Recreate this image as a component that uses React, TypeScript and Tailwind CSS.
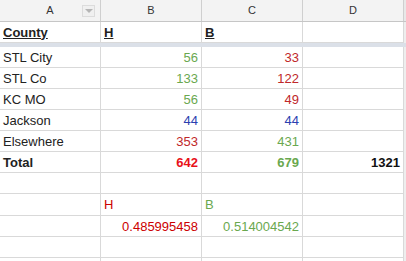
import React from "react";

const font = { fontFamily: '"Liberation Sans", Arial, sans-serif' };

type Cell = {
	text?: string;
	cls?: string;
	right?: boolean;
};

const Row = ({ cells, h = "h-[21px]" }: { cells: Cell[]; h?: string }) => (
	<div className={`flex ${h}`}>
		{cells.map((c, i) => (
			<div
				key={i}
				className={`w-[101px] shrink-0 border-r border-b border-[#d9d9d9] flex items-center px-[3px] text-[13px] leading-none ${c.right ? "justify-end" : ""} ${c.cls ?? "text-[#222]"}`}
			>
				{c.text}
			</div>
		))}
		<div className="flex-1 bg-[#eeeeee]" />
	</div>
);

const green = "text-[#6aa84f]";
const red = "text-[#c0282a]";
const blue = "text-[#2b3fb0]";

export default function App() {
	return (
		<div className="w-[406px] h-[261px] overflow-hidden bg-white" style={font}>
			{/* column headers */}
			<div className="flex h-[22px] bg-[#f3f3f3] border-b border-[#c6c6c6]">
				{["A", "B", "C", "D"].map((l) => (
					<div
						key={l}
						className="relative w-[101px] shrink-0 border-r border-[#cfcfcf] flex items-center justify-center text-[11px] text-[#333]"
					>
						{l}
						{l === "A" && (
							<div className="absolute left-[82px] top-[5px] w-[13px] h-[12px] border border-[#dcdcdc] bg-[#f0f0f0] flex items-center justify-center">
								<div className="w-0 h-0 border-l-[4px] border-r-[4px] border-t-[4px] border-l-transparent border-r-transparent border-t-[#b5b5b5]" />
							</div>
						)}
					</div>
				))}
				<div className="flex-1 bg-[#e8e8e8]" />
			</div>

			<Row
				cells={[
					{ text: "County", cls: "font-bold underline text-[#222]" },
					{ text: "H", cls: "font-bold underline text-[#222]" },
					{ text: "B", cls: "font-bold underline text-[#222]" },
					{},
				]}
				h="h-[21px]"
			/>
			{/* frozen row divider */}
			<div className="h-[4px] bg-[#dbe0e8]" />

			<Row cells={[{ text: "STL City" }, { text: "56", right: true, cls: green }, { text: "33", right: true, cls: red }, {}]} />
			<Row cells={[{ text: "STL Co" }, { text: "133", right: true, cls: green }, { text: "122", right: true, cls: red }, {}]} />
			<Row cells={[{ text: "KC MO" }, { text: "56", right: true, cls: green }, { text: "49", right: true, cls: red }, {}]} />
			<Row cells={[{ text: "Jackson" }, { text: "44", right: true, cls: blue }, { text: "44", right: true, cls: blue }, {}]} />
			<Row cells={[{ text: "Elsewhere" }, { text: "353", right: true, cls: red }, { text: "431", right: true, cls: green }, {}]} />
			<Row
				cells={[
					{ text: "Total", cls: "font-bold text-[#222]" },
					{ text: "642", right: true, cls: "font-bold text-[#e8101a]" },
					{ text: "679", right: true, cls: `font-bold ${green}` },
					{ text: "1321", right: true, cls: "font-bold text-[#111]" },
				]}
			/>
			<Row cells={[{}, {}, {}, {}]} />
			<Row h="h-[22px]" cells={[{}, { text: "H", cls: "text-[#cc0000]" }, { text: "B", cls: green }, {}]} />
			<Row
				cells={[
					{},
					{ text: "0.485995458", right: true, cls: "text-[#cc0000]" },
					{ text: "0.514004542", right: true, cls: green },
					{},
				]}
			/>
			<Row cells={[{}, {}, {}, {}]} />
			<Row cells={[{}, {}, {}, {}]} />
		</div>
	);
}
